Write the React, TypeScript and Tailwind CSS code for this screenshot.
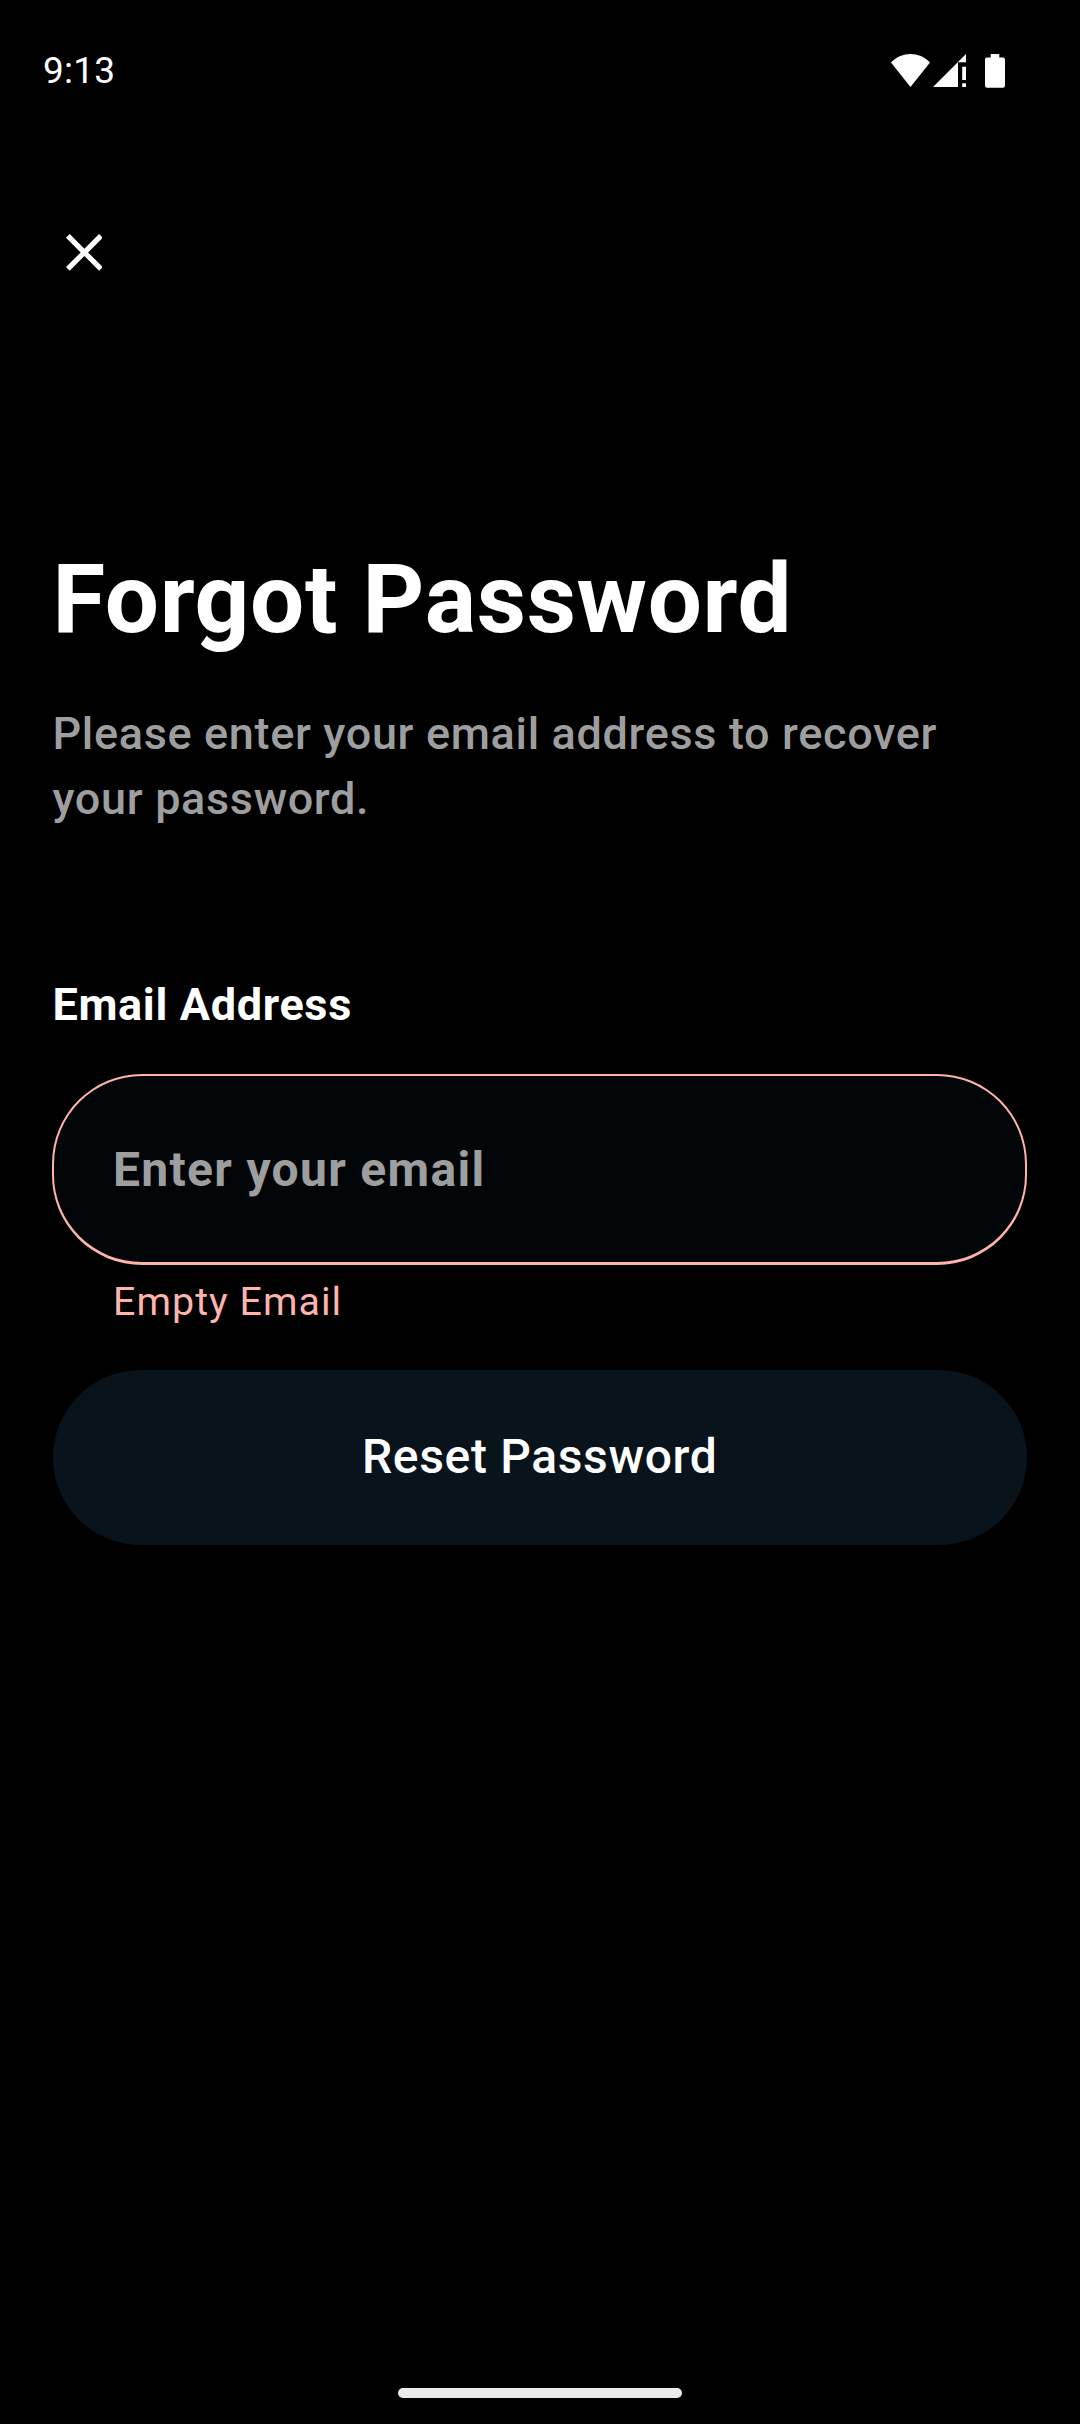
export default function App() {
  return (
    <div className="flex h-[2424px] w-[1080px] flex-col bg-black font-['Roboto',sans-serif] text-white">
      <header className="flex h-[142px] items-center justify-between pl-[43px] pr-[75px]">
        <span className="pb-[2px] text-[37px] leading-none tracking-[0.2px]">9:13</span>
        <div className="flex items-center">
          <svg className="h-[34px] w-[39px]" viewBox="0 0 39 34" fill="currentColor"><path d="M19.5 33 0 8.5C11-2.8 28-2.8 39 8.5Z" /></svg>
          <svg className="ml-[3px] h-[34px] w-[33px]" viewBox="0 0 33 34" fill="currentColor"><path d="M0 33 25 8V33ZM25 8 33 0V8.2H25ZM29.2 12.7H33V26H29.2ZM29.2 29.3H33V33H29.2Z" /></svg>
          <svg className="ml-[19px] h-[34px] w-[20px]" viewBox="0 0 20 34" fill="currentColor"><path d="M5.7 0h8.6v3.5H18q2 0 2 2V31.500q0 2.200-2.200 2.200H2.200q-2.200 0-2.200-2.200V5.500q0-2 2-2h3.700Z" /></svg>
        </div>
      </header>
      <button className="ml-[65.5px] mt-[92px] h-[36px] w-[37px]" aria-label="Close">
        <svg className="h-[36.75px] w-[36.75px]" viewBox="5 5 14 14" fill="currentColor"><path d="M19 6.41 17.59 5 12 10.59 6.41 5 5 6.41 10.59 12 5 17.59 6.41 19 12 13.41 17.59 19 19 17.59 13.41 12z" /></svg>
      </button>
      <main className="mt-[271px] pl-[52.5px] pr-[53px]">
        <h1 className="h-[117px] whitespace-nowrap text-[96px] font-bold leading-[117px] tracking-[0.656px]">Forgot Password</h1>
        <p className="mt-[43px] text-[45px] font-medium leading-[65px] tracking-[0.656px] text-[#9e9e9e]">Please enter your email address to recover<br />your password.</p>
        <label className="mt-[141px] block text-[45px] font-bold leading-[65px] tracking-[0.656px]">Email Address</label>
        <div className="-ml-[0.5px] mt-[37px] flex h-[191px] items-center rounded-[90px] border-2 border-b-3 border-[#ffb4ab] bg-[#020608] pl-[59px] pt-[2px] text-[48px] font-bold tracking-[1.3125px] text-[#9e9e9e]">Enter your email</div>
        <p className="mt-[11px] pl-[60.5px] text-[39.375px] leading-[52px] tracking-[1.05px] text-[#ffb4ab]">Empty Email</p>
        <button className="mt-[42px] block h-[175px] w-full rounded-[88px] bg-[#09131c] pb-[1px] text-[48px] font-medium tracking-[0.656px]">Reset Password</button>
      </main>
      <div className="mt-auto mb-[26px] h-[10px] w-[284px] self-center rounded-full bg-[#ebebeb]" />
    </div>
  );
}
